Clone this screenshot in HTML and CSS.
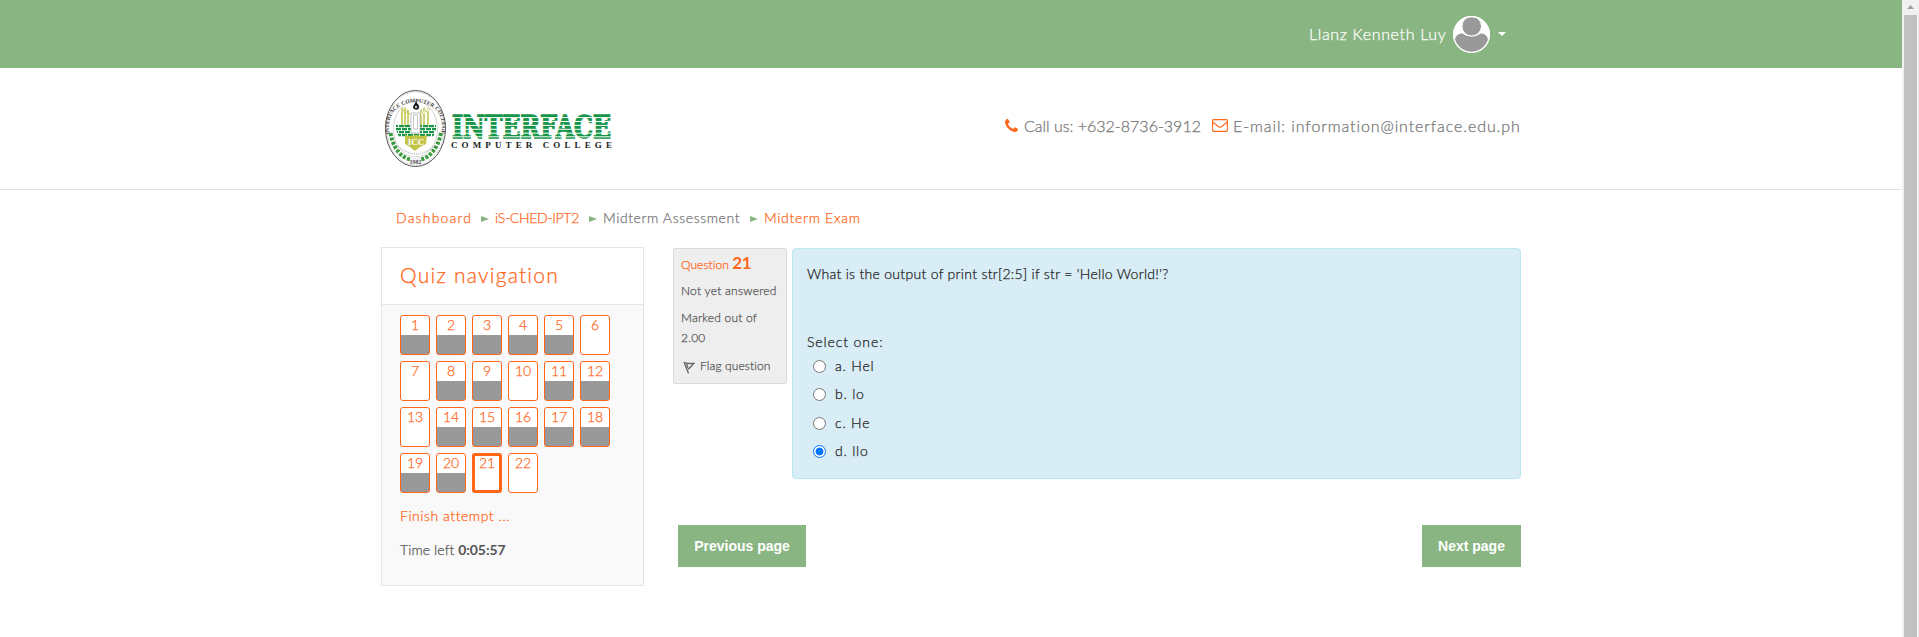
FILE: index.html
```html
<!DOCTYPE html>
<html lang="en">
<head>
<meta charset="utf-8">
<title>Midterm Exam</title>
<link rel="stylesheet" href="styles.css">
</head>
<body>
<div class="page">
  <header class="topbar">
    <div class="container user">
      <span class="user-name">Llanz Kenneth Luy</span>
      <svg class="avatar" viewBox="0 0 37 37"><defs><clipPath id="face"><circle cx="18.500" cy="18.500" r="17.400"/></clipPath></defs><circle cx="18.500" cy="18.500" r="18.500" fill="#fff"/><g fill="#999" clip-path="url(#face)"><path d="M2 25C2 19 6 17.500 9.500 17.500C12 19.500 15 20.500 18.500 20.500S25 19.500 27.500 17.500C31 17.500 35 19 35 25V37H2Z"/><circle cx="18.700" cy="10.200" r="9.800" stroke="#fff"/></g><circle cx="18.500" cy="18.500" r="17.900" fill="none" stroke="#fff" stroke-width="1.200"/></svg>
      <svg class="caret" viewBox="0 0 8 4"><path d="M0 0h8L4 4z" fill="#fff"/></svg>
    </div>
  </header>
  <div class="brandbar">
    <div class="container brand">
      <svg class="logo" viewBox="0 0 230 80">
        <defs>
          <path id="ring" d="M13.500 60C-1 27 16 13.500 34.500 13.500S70 27 55.500 60"/>
          <pattern id="bricks" width="6" height="6" patternUnits="userSpaceOnUse"><path d="M0 0h5v2.300h-5zM3 3h5v2.300h-5zM-3 3h5v2.300h-5z" fill="#169447"/></pattern>
        </defs>
        <ellipse cx="34.500" cy="39.500" rx="30" ry="38" fill="#fff" stroke="#555" stroke-width="1"/>
        <ellipse cx="34.500" cy="39.500" rx="28.800" ry="36.800" fill="none" stroke="#bbb" stroke-width=".5"/>
        <ellipse cx="34.500" cy="40" rx="22" ry="28" fill="#fff" stroke="#aaa" stroke-width=".5"/>
        <text class="ring-text"><textPath href="#ring" startOffset="50%">INTERFACE COMPUTER COLLEGE</textPath></text>
        <g fill="#cdd273"><path d="M20 20l2-2v20h-2zM23 18l2 1v19h-2zM26 20l2 1v17h-2zM46 18l2 2v18h-2zM42 19l2-1v20h-2zM39 21l2-1v18h-2zM20 19l9 5v2l-9-5zM49 19l-9 5v2l9-5z"/></g>
        <path d="M15 36h40v5l-3 7H18l-3-7z" fill="url(#bricks)"/>
        <path d="M30 24h9v20h-9zM32.500 26h4v14h-4z" fill="#fff" stroke="#aaa" stroke-width=".7"/>
        <path d="M35 12c1 3 4 4 3 7c-1 3-6 2-6-1c0-2 2-3 3-6z" fill="#222"/><circle cx="35" cy="18" r="1" fill="#fff"/>
        <path d="M24 46l4 1 7-1 7 1 4-1-1 9-6 3-5 4-5-4-5-3z" fill="#c2c548"/>
        <text class="icc" x="35" y="56">ICC</text>
        <path d="M17 57q9 8 18 8t18-8" fill="none" stroke="#999" stroke-width="1" stroke-dasharray="1 1"/>
        <path d="M9.500 44C12 59 20 69 31 71M60 44C57 59 49 69 38 71" fill="none" stroke="#3b9a3e" stroke-width="4" stroke-dasharray="3 1.500"/>
        <path d="M29 69h11v6H29z" fill="#eee"/><text class="year" x="34.500" y="74.500">1982</text>
        <text class="wordmark" x="71" y="49" textLength="159" lengthAdjust="spacingAndGlyphs">INTERFACE</text>
        <path d="M70 28.600h162M70 32.500h162M70 36.400h162M70 40.300h162M70 44.200h162M70 47.800h162" stroke="#fff" stroke-width="1" fill="none"/>
        <text class="subword" x="70" y="58.800" textLength="161">COMPUTER COLLEGE</text>
      </svg>
      <div class="contact">
        <svg class="phone" viewBox="0 0 1408 1408"><path fill="#ff661a" d="M1408 1112q0 27-10 70.500t-21 68.500q-21 50-122 106-94 51-186 51-27 0-53-3.500t-57.500-12.500-47-14.500-55.500-20.500-49-18q-98-35-175-83-127-79-264-216t-216-264q-48-77-83-175-3-9-18-49t-20.500-55.500-14.500-47-12.500-57.500-3.500-53q0-92 51-186 56-101 106-122 25-11 68.500-21t70.500-10q14 0 21 3 18 6 53 76 11 19 30 54t35 63.500 31 53.500q3 4 17.500 25t21.500 35.500 7 28.500q0 20-28.500 50t-62 55-62 53-28.500 46q0 9 5 22.500t8.500 20.500 14 24 11.500 19q76 137 174 235t235 174q2 1 19 11.500t24 14 20.500 8.500 22.500 5q18 0 46-28.500t53-62 55-62 50-28.500q14 0 28.500 7t35.500 21.500 25 17.500q25 15 53.500 31t63.500 35 54 30q70 35 76 53 3 7 3 21z"/></svg>
        <span class="call">Call us: +632-8736-3912</span>
        <svg class="mail" viewBox="0 0 16 13"><path d="M.6 1.800q0-1.200 1.200-1.200h12.400q1.200 0 1.200 1.200v9.400q0 1.200-1.200 1.200H1.800Q.6 12.400.6 11.200zM.8 3C3 5 5 6.300 6.500 7.700q1.500 1.200 3 0C11 6.300 13 5 15.200 3" fill="none" stroke="#ff661a" stroke-width="1.100"/></svg>
        <span class="email">E-mail: information@interface.edu.ph</span>
      </div>
    </div>
  </div>
  <main class="container">
    <nav class="crumbs">
      <a class="c1">Dashboard</a><i class="arrow"></i><a class="c2">iS-CHED-IPT2</a><i class="arrow"></i><span class="c3">Midterm Assessment</span><i class="arrow"></i><a class="c4">Midterm Exam</a>
    </nav>
    <div class="columns">
      <aside class="block">
        <h2><span>Quiz navigation</span></h2>
        <div class="block-body">
          <div class="qgrid">
            <a class="q done">1</a><a class="q done">2</a><a class="q done">3</a><a class="q done">4</a><a class="q done">5</a><a class="q">6</a>
            <a class="q">7</a><a class="q done">8</a><a class="q done">9</a><a class="q">10</a><a class="q done">11</a><a class="q done">12</a>
            <a class="q">13</a><a class="q done">14</a><a class="q done">15</a><a class="q done">16</a><a class="q done">17</a><a class="q done">18</a>
            <a class="q done">19</a><a class="q done">20</a><a class="q current">21</a><a class="q">22</a>
          </div>
          <a class="finish">Finish attempt ...</a>
          <div class="timer"><span>Time left</span> <b>0:05:57</b></div>
        </div>
      </aside>
      <section class="content">
        <div class="question">
          <div class="info">
            <div class="qno"><span>Question</span> <b>21</b></div>
            <div class="state">Not yet answered</div>
            <div class="grade"><span>Marked out of</span><br>2.00</div>
            <div class="flag"><svg viewBox="0 0 12 13"><path d="M1 1l4.500 11.500M2 1.500c2 1.500 5 1 9 .8C9 4 8 6 5 8.500M3.500 2.500L5 7" fill="none" stroke="#666" stroke-width="1.300"/></svg><span>Flag question</span></div>
          </div>
          <div class="formulation">
            <p class="qtext">What is the output of print str[2:5] if str = 'Hello World!'?</p>
            <p class="prompt">Select one:</p>
            <div class="answers">
              <label><i class="radio"></i><span>a. Hel</span></label>
              <label><i class="radio"></i><span>b. lo</span></label>
              <label><i class="radio"></i><span>c. He</span></label>
              <label><i class="radio on"></i><span>d. llo</span></label>
            </div>
          </div>
        </div>
        <div class="actions"><button class="prev">Previous page</button><button class="next">Next page</button></div>
      </section>
    </div>
  </main>
</div>
<div class="scrollbar"><svg viewBox="0 0 17 15"><path d="M5 9h7L8.500 5z" fill="#a0a0a0"/></svg><div class="thumb"></div></div>
</body>
</html>
```
FILE: styles.css
```css
* { box-sizing: border-box; }
body { margin: 0; height: 637px; overflow: hidden; display: grid; grid-template-columns: 1902px 17px; background: #fff; color: #555; font-family: "Century Gothic", Lato, sans-serif; font-size: 14px; font-weight: 300; white-space: nowrap; -webkit-text-stroke: .25px; }
p, h2 { margin: 0; font-weight: 300; }
b { font-weight: 700; -webkit-text-stroke: 0; }
svg { -webkit-text-stroke: 0; }
a, .qno { color: #ff661a; }
.container { width: 1140px; margin-left: 381px; }

.topbar { height: 68px; background: #88b581; }
.user { height: 68px; display: flex; align-items: center; justify-content: flex-end; padding-right: 15px; color: #fff; }
.user-name { width: 138px; margin-right: 6px; padding-bottom: 2px; font-size: 16px; letter-spacing: .65px; }
.avatar { width: 37px; height: 37px; }
.caret { width: 8px; height: 4px; margin-left: 8px; }

.brandbar { height: 122px; border-bottom: 1px solid #e1e1e1; }
.brand { height: 121px; display: flex; justify-content: space-between; }
.logo { width: 230px; height: 80px; margin-top: 21px; overflow: visible; }
.ring-text { font: bold 5.600px "Liberation Serif", serif; fill: #444; text-anchor: middle; }
.icc { font: bold 9px "Liberation Serif", serif; fill: #fff; text-anchor: middle; }
.year { font: bold 6px "Liberation Serif", serif; fill: #555; text-anchor: middle; }
.wordmark { font: bold 32px "DejaVu Serif", serif; fill: #169447; stroke: #169447; stroke-width: 1.600px; }
.subword { font: bold 9px "Liberation Serif", serif; fill: #222; }
.contact { display: flex; align-items: center; height: 115px; font-size: 16px; color: #757575; }
.contact span { padding-bottom: 1px; }
.phone { width: 13px; height: 13px; margin-right: 6px; }
.call { width: 178px; letter-spacing: 0; }
.mail { width: 16px; height: 13px; margin: 0 5px 0 10px; }
.email { width: 288px; letter-spacing: .9px; }

.crumbs { height: 57px; padding: 0 0 2px 15px; display: flex; align-items: center; color: #757575; letter-spacing: .6px; }
.c1 { width: 76px; letter-spacing: 1.200px; }
.c2 { width: 85px; letter-spacing: -.3px; }
.c3 { width: 138px; }
.c4 { width: 98px; letter-spacing: .7px; }
.arrow { border-left: 8px solid #88b581; border-top: 3.500px solid transparent; border-bottom: 3.500px solid transparent; margin: 3px 6px 0 9px; }

.columns { display: flex; gap: 29px; align-items: flex-start; }
.block { width: 263px; height: 339px; border: 1px solid #e5e5e5; background: #f9f9f9; }
.block h2 { height: 57px; padding-left: 18px; line-height: 54px; border-bottom: 1px solid #e5e5e5; background: #fff; color: #ff661a; font-size: 21px; letter-spacing: 1.250px; }
.block-body { padding: 10px 18px; }
.qgrid { display: grid; grid-template-columns: repeat(6, 30px); gap: 6px; }
.q { height: 40px; border: 1px solid #ff661a; border-radius: 3px; background: #fff; text-align: center; line-height: 18px; letter-spacing: 0; }
.done { background: linear-gradient(#fff 19px, #999 19px); }
.current { border-width: 3px; line-height: 14px; }
.finish { display: block; margin-top: 13px; line-height: 20px; letter-spacing: .55px; }
.timer { margin-top: 14px; line-height: 20px; letter-spacing: .1px; }
.timer b { letter-spacing: -.1px; }

.content { width: 848px; padding-top: 1px; }
.question { display: flex; gap: 5px; align-items: flex-start; }
.info { width: 114px; height: 136px; padding: 4px 7px; border: 1px solid #dcdcdc; border-radius: 2px; background: #eee; font-size: 12px; line-height: 20px; letter-spacing: .2px; }
.qno span { letter-spacing: .05px; }
.qno b { font-size: 17px; letter-spacing: -.5px; }
.state { margin-top: 6px; letter-spacing: .25px; }
.grade { margin-top: 7px; }
.flag { display: flex; margin-top: 8px; letter-spacing: .1px; }
.flag svg { width: 12px; height: 13px; margin: 5px 5px 0 2px; }
.formulation { width: 729px; height: 231px; padding: 15px 14px; border: 1px solid #bce8f1; border-radius: 4px; background: #d9edf6; color: #222; }
.qtext { line-height: 20px; letter-spacing: .3px; }
.prompt { margin-top: 48px; line-height: 20px; letter-spacing: .9px; }
.answers { display: grid; grid-auto-rows: 28.300px; margin-top: 0; letter-spacing: .8px; }
.answers label { display: flex; align-items: center; }
.answers span { padding-bottom: 1px; }
.radio { width: 13px; height: 13px; margin: 1px 9px 0 6px; border: 1px solid #767676; border-radius: 50%; background: #fff; }
.on { border-color: #0075ff; background: radial-gradient(circle, #0075ff 3.500px, #fff 4.300px); }

.actions { display: flex; justify-content: space-between; margin-top: 46px; padding-left: 5px; }
.actions button { height: 42px; padding: 0; border: 0; background: #88b581; color: #fff; font: bold 14px "Liberation Sans", Arial, sans-serif; -webkit-text-stroke: 0; }
.prev { width: 128px; }
.next { width: 99px; }

.scrollbar { background: #f1f1f1; }
.scrollbar svg { display: block; width: 17px; height: 15px; }
.thumb { width: 13px; height: 622px; margin-left: 2px; background: #c1c1c1; }
```
